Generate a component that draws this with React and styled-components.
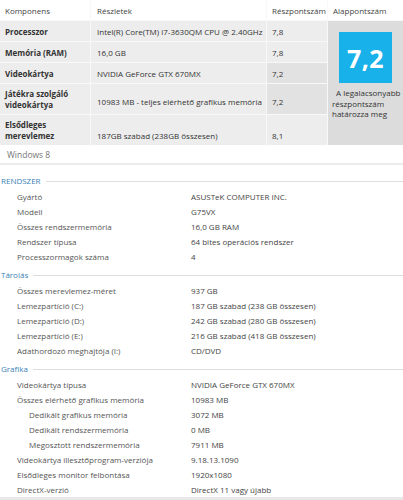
import React from 'react';
import styled, { createGlobalStyle } from 'styled-components';

const Global = createGlobalStyle`
  html, body { margin: 0; padding: 0; background: #fff; }
  body {
    width: 403px; height: 500px; overflow: hidden;
    font-family: "Open Sans", "Noto Sans", sans-serif;
    font-size: 8px; color: #333;
  }
`;

const Page = styled.div`
  width: 403px;
  height: 500px;
  box-sizing: border-box;
  display: flex;
  flex-direction: column;
  border-bottom: 3px solid #e8e8e8;
`;

const ScoreTable = styled.div`
  display: grid;
  grid-template-columns: 90px 175px 60px 1fr;
  grid-template-rows: 20px 20px 20px 20px 30px 30px;
  column-gap: 1px;
  row-gap: 1px;
  background: #f8f8f8;
`;

const HeadCell = styled.div`
  background: #fff;
  display: flex;
  align-items: center;
  padding-left: ${p => p.$pad}px;
  color: #444;
  font-size: 8px;
`;

const Cell = styled.div`
  background: ${p => (p.$low ? '#e2e2e2' : '#ededed')};
  display: flex;
  align-items: center;
  padding-left: ${p => p.$pad}px;
  padding-top: ${p => p.$shift || 0}px;
  color: #333;
  font-size: 8px;
  font-weight: ${p => (p.$bold ? 700 : 400)};
  line-height: 11px;
  box-sizing: border-box;
`;

const BaseCell = styled.div`
  grid-column: 4;
  grid-row: 2 / span 5;
  background: #dcdcdc;
  display: flex;
  flex-direction: column;
  align-items: center;
  padding-top: 11px;
`;

const ScoreBox = styled.div`
  width: 53px;
  height: 51px;
  background: #19b1e9;
  color: #fff;
  display: flex;
  align-items: center;
  justify-content: center;
  font-size: 25px;
  font-weight: 700;
  letter-spacing: 0.5px;
`;

const Caption = styled.div`
  align-self: stretch;
  margin-top: 5px;
  padding: 0 2px 0 4px;
  font-size: 8px;
  line-height: 10.5px;
  color: #333;
  text-indent: 4px;
`;

const OsRow = styled.div`
  height: 19px;
  display: flex;
  align-items: center;
  padding-left: 7px;
  color: #777;
  font-size: 8.5px;
  border-bottom: 2px solid #ececec;
  margin-top: 1px;
`;

const Details = styled.div`
  margin-top: 6px;
  display: flex;
  flex-direction: column;
`;

const Section = styled.section`
  display: flex;
  flex-direction: column;
  margin-top: ${p => (p.$first ? 0 : 1)}px;
`;

const SectionHead = styled.div`
  height: 18px;
  display: flex;
  align-items: center;
  color: #3b7fb6;
  font-size: 8px;
  padding-left: 1px;
`;

const HeadLine = styled.div`
  flex: 1;
  height: 1px;
  background: #dddddd;
  margin: 2px 0 0 5px;
`;

const Item = styled.div`
  height: 15px;
  display: grid;
  grid-template-columns: 191px 1fr;
  align-items: center;
  font-size: 8px;
`;

const ItemLabel = styled.div`
  padding-left: ${p => (p.$indent ? 29 : 17)}px;
  color: #555;
  white-space: nowrap;
`;

const ItemValue = styled.div`
  color: #444;
  white-space: nowrap;
`;

const rows = [
  { name: 'Processzor', detail: 'Intel(R) Core(TM) i7-3630QM CPU @ 2.40GHz', score: '7,8' },
  { name: 'Memória (RAM)', detail: '16,0 GB', score: '7,8' },
  { name: 'Videokártya', detail: 'NVIDIA GeForce GTX 670MX', score: '7,2', low: true },
  { name: 'Játékra szolgáló videokártya', detail: '10983 MB - teljes elérhető grafikus memória', score: '7,2', low: true, shift: 4 },
  { name: 'Elsődleges merevlemez', detail: '187GB szabad (238GB összesen)', score: '8,1', shift: 11 },
];

const sections = [
  {
    title: 'RENDSZER',
    items: [
      ['Gyártó', 'ASUSTeK COMPUTER INC.'],
      ['Modell', 'G75VX'],
      ['Összes rendszermemória', '16,0 GB RAM'],
      ['Rendszer típusa', '64 bites operációs rendszer'],
      ['Processzormagok száma', '4'],
    ],
  },
  {
    title: 'Tárolás',
    items: [
      ['Összes merevlemez-méret', '937 GB'],
      ['Lemezpartíció (C:)', '187 GB szabad (238 GB összesen)'],
      ['Lemezpartíció (D:)', '242 GB szabad (280 GB összesen)'],
      ['Lemezpartíció (E:)', '216 GB szabad (418 GB összesen)'],
      ['Adathordozó meghajtója (I:)', 'CD/DVD'],
    ],
  },
  {
    title: 'Grafika',
    items: [
      ['Videokártya típusa', 'NVIDIA GeForce GTX 670MX'],
      ['Összes elérhető grafikus memória', '10983 MB'],
      ['Dedikált grafikus memória', '3072 MB', true],
      ['Dedikált rendszermemória', '0 MB', true],
      ['Megosztott rendszermemória', '7911 MB', true],
      ['Videokártya illesztőprogram-verziója', '9.18.13.1090'],
      ['Elsődleges monitor felbontása', '1920x1080'],
      ['DirectX-verzió', 'DirectX 11 vagy újabb'],
    ],
  },
];

export default function App() {
  return (
    <>
      <Global />
      <Page>
        <ScoreTable>
          <HeadCell $pad={5}>Komponens</HeadCell>
          <HeadCell $pad={6}>Részletek</HeadCell>
          <HeadCell $pad={5}>Részpontszám</HeadCell>
          <HeadCell $pad={5}>Alappontszám</HeadCell>
          {rows.map(r => (
            <React.Fragment key={r.name}>
              <Cell $pad={5} $bold>{r.name}</Cell>
              <Cell $pad={6} $shift={r.shift}>{r.detail}</Cell>
              <Cell $pad={5} $shift={r.shift} $low={r.low}>{r.score}</Cell>
            </React.Fragment>
          ))}
          <BaseCell>
            <ScoreBox>7,2</ScoreBox>
            <Caption>A legalacsonyabb részpontszám határozza meg</Caption>
          </BaseCell>
        </ScoreTable>
        <OsRow>Windows 8</OsRow>
        <Details>
          {sections.map((s, i) => (
            <Section key={s.title} $first={i === 0}>
              <SectionHead>
                {s.title}
                <HeadLine />
              </SectionHead>
              {s.items.map(([label, value, indent]) => (
                <Item key={label}>
                  <ItemLabel $indent={indent}>{label}</ItemLabel>
                  <ItemValue>{value}</ItemValue>
                </Item>
              ))}
            </Section>
          ))}
        </Details>
      </Page>
    </>
  );
}
